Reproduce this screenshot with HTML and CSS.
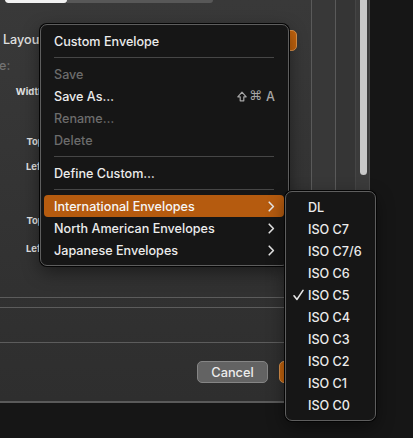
FILE: index.html
```html
<!DOCTYPE html>
<html>
<head>
<meta charset="utf-8">
<link rel="stylesheet" href="styles.css">
</head>
<body>
<div class="screen">
  <div class="window">
    <div class="pane">
      <div class="upper">
        <div class="form">
          <div class="segmented"><span class="seg-on"></span><span class="seg-off"></span></div>
          <div class="row row-layout">
            <span class="label-main">Layout:</span>
            <span class="popup"></span>
          </div>
          <div class="row row-size"><span class="label-clip">e:</span></div>
          <div class="row row-width"><span class="label-bold">Width:</span></div>
          <div class="row row-top1"><span class="label-bold">Top:</span></div>
          <div class="row row-left1"><span class="label-bold">Left:</span></div>
          <div class="row row-top2"><span class="label-bold">Top:</span></div>
          <div class="row row-left2"><span class="label-bold">Left:</span></div>
        </div>
        <div class="col col-a"></div>
        <div class="col col-b"></div>
      </div>
      <div class="lower">
        <div class="divider"></div>
        <div class="band"></div>
        <div class="divider"></div>
        <div class="area"></div>
        <div class="divider"></div>
        <div class="buttons">
          <span class="btn btn-cancel">Cancel</span>
          <span class="btn btn-ok"></span>
        </div>
      </div>
    </div>
    <div class="track"><div class="thumb"></div></div>
  </div>

  <div class="menu menu-main">
    <div class="item">Custom Envelope</div>
    <div class="sep"></div>
    <div class="item disabled">Save</div>
    <div class="item"><span>Save As…</span>
      <span class="shortcut"><svg class="shift" width="10" height="11" viewBox="0 0 10 11"><path d="M5 1.2 L9.2 5.8 L6.8 5.8 L6.8 9.8 L3.2 9.8 L3.2 5.8 L0.8 5.8 Z" fill="none" stroke="currentColor" stroke-width="1.2" stroke-linejoin="round"/></svg><span class="cmd">⌘</span><span class="key">A</span></span></div>
    <div class="item disabled">Rename…</div>
    <div class="item disabled">Delete</div>
    <div class="sep"></div>
    <div class="item">Define Custom…</div>
    <div class="sep"></div>
    <div class="item active"><span>International Envelopes</span>
      <svg class="chev" width="7" height="11" viewBox="0 0 7 11"><polyline points="1.2,1.2 5.4,5.5 1.2,9.8" fill="none" stroke="currentColor" stroke-width="1.6" stroke-linecap="round" stroke-linejoin="round"/></svg></div>
    <div class="item"><span>North American Envelopes</span>
      <svg class="chev" width="7" height="11" viewBox="0 0 7 11"><polyline points="1.2,1.2 5.4,5.5 1.2,9.8" fill="none" stroke="currentColor" stroke-width="1.6" stroke-linecap="round" stroke-linejoin="round"/></svg></div>
    <div class="item"><span>Japanese Envelopes</span>
      <svg class="chev" width="7" height="11" viewBox="0 0 7 11"><polyline points="1.2,1.2 5.4,5.5 1.2,9.8" fill="none" stroke="currentColor" stroke-width="1.6" stroke-linecap="round" stroke-linejoin="round"/></svg></div>
  </div>

  <div class="menu menu-sub">
    <div class="sitem">DL</div>
    <div class="sitem">ISO C7</div>
    <div class="sitem">ISO C7/6</div>
    <div class="sitem">ISO C6</div>
    <div class="sitem checked">
      <svg class="check" width="11" height="12" viewBox="0 0 11 12"><polyline points="1,6.8 4,10.4 10,1.4" fill="none" stroke="currentColor" stroke-width="1.6" stroke-linecap="round" stroke-linejoin="round"/></svg>ISO C5</div>
    <div class="sitem">ISO C4</div>
    <div class="sitem">ISO C3</div>
    <div class="sitem">ISO C2</div>
    <div class="sitem">ISO C1</div>
    <div class="sitem">ISO C0</div>
  </div>
</div>
</body>
</html>
```

FILE: styles.css
```css
html, body {
  margin: 0;
  padding: 0;
  background: #151515;
}
body {
  font-family: Inter, "Noto Sans", "DejaVu Sans", sans-serif;
  width: 413px;
  height: 438px;
  overflow: hidden;
}
.screen {
  position: relative;
  width: 413px;
  height: 438px;
  background: #161616;
}
.window {
  width: 370px;
  height: 403px;
  box-sizing: border-box;
  border-bottom: 2px solid #5a5a5a;
  display: flex;
  background: linear-gradient(#393939, #2e2e2e);
}
.pane {
  width: 355px;
  display: flex;
  flex-direction: column;
}
.upper {
  height: 297px;
  display: flex;
}
.form {
  width: 311px;
  display: flex;
  flex-direction: column;
}
.col {
  border-left: 1px solid #5a5a5a;
  box-sizing: border-box;
}
.col-a {
  width: 24px;
  background: #383838;
}
.col-b {
  flex: 1;
  background: #353535;
}
.segmented {
  margin-left: 5px;
  width: 208px;
  height: 3px;
  display: flex;
  border-radius: 0 0 4px 4px;
  overflow: hidden;
}
.seg-on {
  width: 62px;
  background: #f2f2f2;
  border-radius: 0 0 4px 4px;
}
.seg-off {
  flex: 1;
  background: #585858;
}
.row {
  display: flex;
  align-items: center;
}
.row-layout {
  margin-top: 26px;
  height: 22px;
}
.label-main {
  margin-left: 3px;
  font-size: 12.6px;
  font-weight: 500;
  color: #e0e0e0;
  line-height: 16px;
}
.popup {
  margin-left: auto;
  margin-right: 14px;
  width: 140px;
  height: 21px;
  box-sizing: border-box;
  border-radius: 5px;
  background: #c2630d;
  border: 1px solid #d9924c;
}
.row-size {
  margin-top: 7px;
  height: 16px;
}
.label-clip {
  font-size: 12.6px;
  font-weight: 500;
  color: #727272;
  line-height: 16px;
  margin-left: -1px;
}
.label-bold {
  width: 47px;
  display: flex;
  justify-content: flex-end;
  white-space: nowrap;
  font-size: 9.5px;
  font-weight: 700;
  color: #e2e2e2;
  line-height: 12px;
}
.row-width { margin-top: 12px; }
.row-top1 { margin-top: 38px; }
.row-left1 { margin-top: 13px; }
.row-top2 { margin-top: 42px; }
.row-left2 { margin-top: 16px; }

.lower {
  flex: 1;
  display: flex;
  flex-direction: column;
}
.divider {
  height: 1px;
  background: #5c5c5c;
}
.band { height: 9px; }
.area { height: 34px; }
.buttons {
  flex: 1;
  display: flex;
  align-items: flex-start;
  padding-top: 18px;
  padding-left: 197px;
  gap: 11px;
}
.btn {
  height: 22px;
  box-sizing: border-box;
  border-radius: 5px;
  font-size: 12.8px;
  font-weight: 500;
  display: flex;
  align-items: center;
  justify-content: center;
  color: #ececec;
}
.btn-cancel {
  width: 71px;
  background: #636363;
  border: 1px solid #858585;
}
.btn-ok {
  width: 66px;
  background: #c2630d;
  border: 1px solid #d9924c;
}
.track {
  width: 15px;
  background: #3b3b3b;
  border-left: 1px solid #454545;
  border-right: 1px solid #4a4a4a;
  box-sizing: border-box;
  padding-left: 4px;
}
.thumb {
  width: 7px;
  height: 175px;
  background: #c9c9c9;
  border-radius: 0 0 4px 4px;
}

/* menus */
.menu {
  position: absolute;
  box-sizing: border-box;
  background: #161616;
  border: 1px solid #5e5e5e;
  border-radius: 7px;
  box-shadow: 0 0 0 1px #050505, 0 6px 18px rgba(0,0,0,0.45);
  color: #ececec;
  font-size: 12.6px;
  font-weight: 500;
}
.menu-main {
  left: 40px;
  top: 24px;
  width: 249px;
  height: 242px;
  padding: 5px 4px 4px 3px;
}
.item {
  height: 22px;
  display: flex;
  align-items: center;
  justify-content: space-between;
  padding: 0 9px 0 10px;
  border-radius: 4px;
  white-space: nowrap;
}
.item.disabled { color: #6c6c6c; }
.item.active {
  background: #b55b0f;
  color: #f6f6f6;
}
.shortcut {
  display: flex;
  align-items: center;
  gap: 2px;
  color: #a6a6a6;
}
.shift {
  display: block;
}
.cmd {
  font-family: "DejaVu Sans", sans-serif;
  font-size: 13px;
  font-weight: 400;
  line-height: 14px;
}
.key {
  font-size: 12.6px;
  margin-left: 2px;
}
.chev {
  display: block;
  color: #e6e6e6;
}
.sep {
  height: 1px;
  margin: 5px 10px 5px 10px;
  background: #464646;
}
.menu-sub {
  left: 285px;
  top: 191px;
  width: 91px;
  height: 230px;
  padding: 4px 3px;
}
.sitem {
  height: 22px;
  display: flex;
  align-items: center;
  padding-left: 19px;
  position: relative;
  white-space: nowrap;
}
.check {
  position: absolute;
  left: 4px;
  top: 5px;
  color: #e6e6e6;
}
```
